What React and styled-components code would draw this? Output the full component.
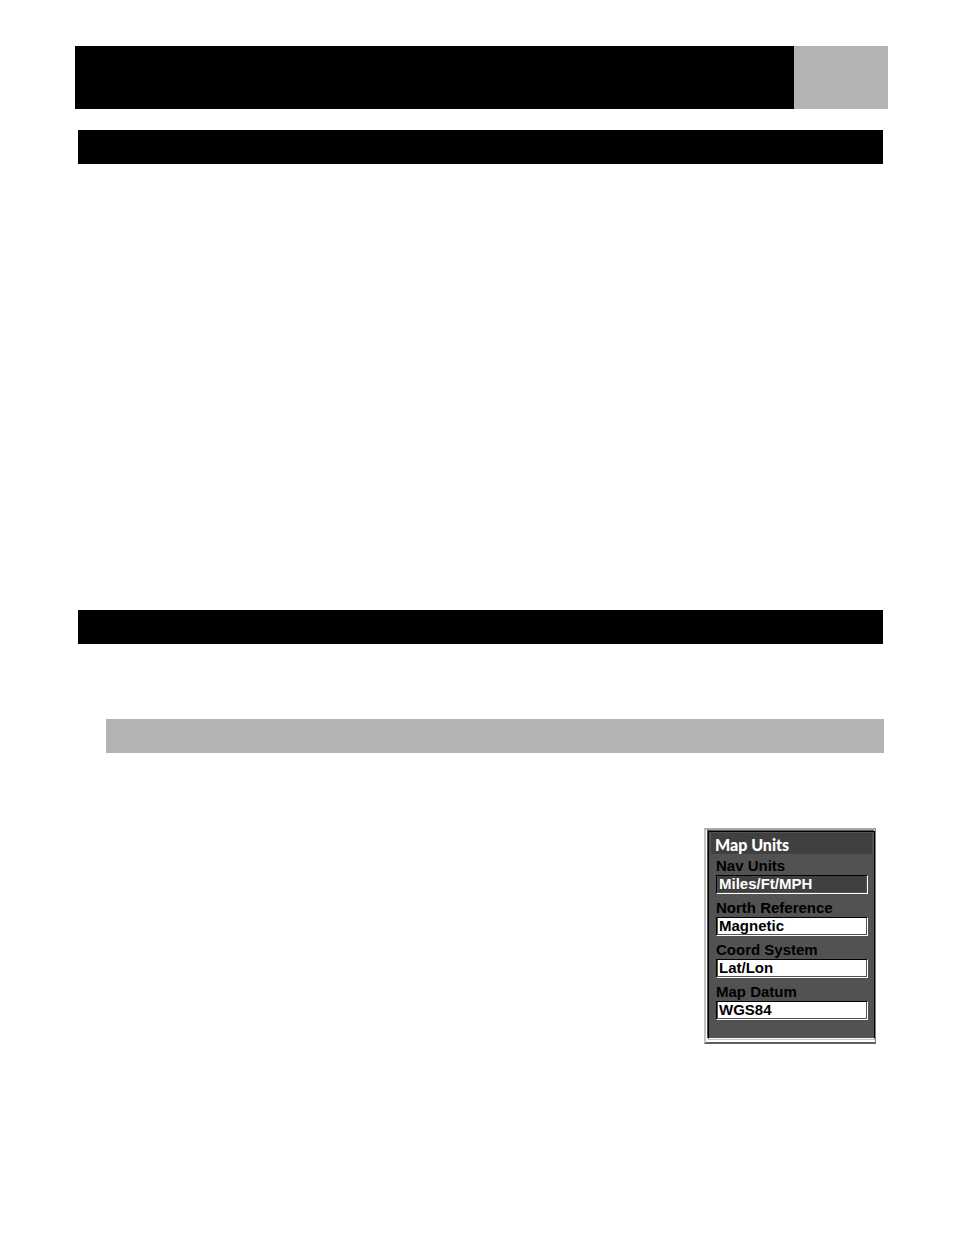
import React, { useState } from 'react'
import styled, { createGlobalStyle } from 'styled-components'

const settings = [
  { id: 'nav-units', label: 'Nav Units', value: 'Miles/Ft/MPH', active: true },
  { id: 'north-reference', label: 'North Reference', value: 'Magnetic' },
  { id: 'coord-system', label: 'Coord System', value: 'Lat/Lon' },
  { id: 'map-datum', label: 'Map Datum', value: 'WGS84' },
]

const Setting = ({ id, label, value, active }) => {
  const [selected, setSelected] = useState(value)
  return (
    <StyledSetting>
      <StyledLabel htmlFor={id}>{label}</StyledLabel>
      <StyledField>
        <StyledSelect
          id={id}
          $active={active}
          value={selected}
          onChange={(e) => setSelected(e.target.value)}
        >
          <option value={value}>{value}</option>
        </StyledSelect>
      </StyledField>
    </StyledSetting>
  )
}

const App = () => {
  return (
    <>
      <GlobalStyle />
      <StyledPage>
        <StyledHeader>
          <StyledHeaderTitle />
          <StyledHeaderTab />
        </StyledHeader>
        <StyledSection $space='446px'>
          <StyledBar />
        </StyledSection>
        <StyledSection $space='75px'>
          <StyledBar />
        </StyledSection>
        <StyledSubBar />
        <StyledContent>
          <StyledPanel>
            <StyledBody>
              <StyledTitle>Map Units</StyledTitle>
              {settings.map((setting) => (
                <Setting key={setting.id} {...setting} />
              ))}
            </StyledBody>
          </StyledPanel>
        </StyledContent>
      </StyledPage>
    </>
  )
}

const GlobalStyle = createGlobalStyle`
  * {
    box-sizing: border-box;
  }
  body {
    margin: 0;
    background-color: white;
    font-family: 'Liberation Sans', Arial, sans-serif;
  }
`

const StyledPage = styled.main`
  padding: 46px 66px 48px 75px;
  min-height: 100vh;
`

const StyledHeader = styled.header`
  display: flex;
  height: 63px;
  margin-bottom: 21px;
`

const StyledHeaderTitle = styled.div`
  flex: 1;
  background-color: black;
`

const StyledHeaderTab = styled.div`
  width: 94px;
  background-color: #b3b3b3;
`

const StyledSection = styled.section`
  margin: 0 5px 0 3px;
  padding-bottom: ${(props) => props.$space};
`

const StyledBar = styled.div`
  height: 34px;
  background-color: black;
`

const StyledSubBar = styled.div`
  height: 34px;
  margin: 0 4px 0 31px;
  background-color: #b3b3b3;
`

const StyledContent = styled.div`
  display: flex;
  justify-content: flex-end;
  padding: 75px 12px 0 0;
`

const StyledPanel = styled.section`
  width: 172px;
  border-style: solid;
  border-width: 2px 1px 2px 2px;
  border-color: #a8a8a8 #808080 #606060 #c4c4c4;
  background-color: white;
`

const StyledBody = styled.div`
  margin: 1px 0 3px 2px;
  padding: 1px 2px 16px 2px;
  border-style: solid;
  border-width: 1px;
  border-color: black black white black;
  background-color: #525252;
  box-shadow: -1px -1px 0 #525252, 0 1px 0 #c4c4c4;
`

const StyledTitle = styled.h2`
  margin: 0;
  padding-left: 4px;
  height: 21px;
  background-color: #404040;
  color: white;
  font-family: Lato, sans-serif;
  font-size: 16px;
  font-weight: 900;
  line-height: 24px;
`

const StyledSetting = styled.div`
  display: flex;
  flex-direction: column;
  padding: 2px 4px 2px 5px;
`

const StyledLabel = styled.label`
  color: black;
  font-size: 15px;
  font-weight: bold;
  line-height: 19px;
`

const StyledField = styled.div`
  display: flex;
  height: 19px;
  padding: 0 1px 1px 1px;
  border: 1px solid white;
  border-top-color: black;
  border-left-color: black;
  background-color: #525252;
`

const StyledSelect = styled.select`
  flex: 1;
  min-width: 0;
  margin: 0;
  padding: 0 0 0 1px;
  border: none;
  border-radius: 0;
  appearance: none;
  background-color: ${(props) => (props.$active ? '#404040' : 'white')};
  color: ${(props) => (props.$active ? 'white' : 'black')};
  font-family: inherit;
  font-size: 15px;
  font-weight: bold;
  line-height: 16px;
`

export default App
